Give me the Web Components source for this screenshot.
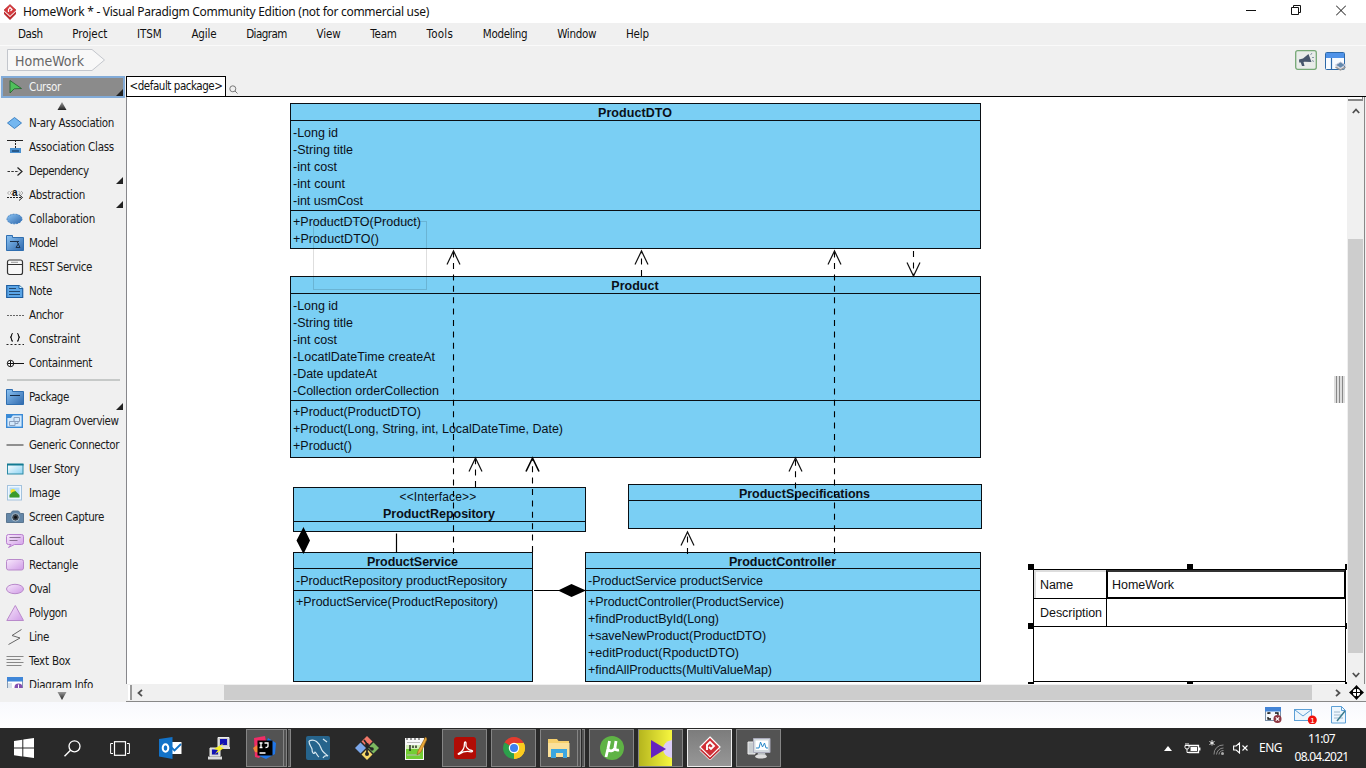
<!DOCTYPE html>
<html lang="en">
<head>
<meta charset="utf-8">
<title>HomeWork * - Visual Paradigm Community Edition</title>
<style>
html,body{margin:0;height:100%;overflow:hidden;background:#f0f0f0}
</style>
</head>
<body>
<vp-app></vp-app>
<script>
const UI = '"Noto Sans","Open Sans",sans-serif';
const TOOL = '"DejaVu Sans Condensed","DejaVu Sans","Noto Sans",sans-serif';

/* Base: renders a string template into an open shadow root */
class Base extends HTMLElement {
  connectedCallback() {
    if (this.shadowRoot) return;
    const t = document.createElement('template');
    t.innerHTML = this.view();
    this.attachShadow({mode: 'open'}).append(document.importNode(t.content, true));
  }
}

/* Text run tracked to a given width */
class FitText extends Base {
  view() {
    return `<style>:host{display:inline-block;white-space:pre;flex:none}</style><slot></slot>`;
  }
  connectedCallback() { super.connectedCallback(); FitText.all.push(this); }
  fit() {
    const w = +this.getAttribute('w');
    const own = this.getBoundingClientRect().width;
    if (w && own) this.style.letterSpacing = ((w - own) / this.textContent.length).toFixed(3) + 'px';
  }
}
FitText.all = [];
customElements.define('fit-text', FitText);

const DEFS = `<defs>
<linearGradient id="b" x1="0" y1="0" x2="1" y2="1"><stop offset="0" stop-color="#8cc4f4"/><stop offset="1" stop-color="#2f68ac"/></linearGradient>
<linearGradient id="p" x1="0" y1="0" x2="1" y2="1"><stop offset="0" stop-color="#f8e8fc"/><stop offset="1" stop-color="#cf9be6"/></linearGradient>
<linearGradient id="c" x1="0" y1="0" x2="1" y2="1"><stop offset="0" stop-color="#fff"/><stop offset="1" stop-color="#8bd3f3"/></linearGradient>
<linearGradient id="k" x1="0" y1="0" x2="0" y2="1"><stop offset="0" stop-color="#999"/><stop offset="1" stop-color="#222"/></linearGradient>
<linearGradient id="y" x1="0" y1="0" x2="1" y2="0"><stop offset="0" stop-color="#b5b51e"/><stop offset="1" stop-color="#f7f740"/></linearGradient></defs>`;

/* name: [width, height, svg body] */
const ICONS = {
  cursor: [18,18,'<path d="M4 2.500V15l4.200-4.200L15.500 10.500Z" fill="#4fc05a" stroke="#1f5e2b" stroke-width=".8"/>'],
  nary: [18,18,'<path d="M1.500 9 8.500 3.500 15.500 9 8.500 14.500Z" fill="#74b7f0" stroke="#3c82c4"/>'],
  assoc: [18,18,'<path d="M1 2.500h16M9.500 3v8" stroke="#222" fill="none"/><path d="M9.500 4v6" stroke="#eee" stroke-dasharray="1 2"/><rect x="4" y="10" width="11" height="5" fill="#4a90d0"/><rect x="6" y="12" width="7" height="2" fill="#285a8c"/>'],
  dep: [18,18,'<path d="M1.500 9.500H13" stroke="#333" stroke-dasharray="2.500 1.300"/><path d="M11.500 5.500 16 9.500l-4.500 4" fill="none" stroke="#222" stroke-width="1.200"/>'],
  abs: [18,18,'<path d="M1 11.500h15" stroke="#222" stroke-dasharray="2 1"/><path d="M13 8.500l3.500 3-3.500 3" fill="none" stroke="#222"/><path d="M3.500 5 1.500 7l2 2M6 5 4 7l2 2M12.500 5l2 2-2 2M15 5l2 2-2 2" fill="none" stroke="#999" stroke-width=".8"/><text x="6" y="9.500" font-family="Liberation Sans" font-weight="bold" font-size="10" fill="#111">a</text>'],
  collab: [18,18,'<ellipse cx="8.500" cy="9" rx="7.500" ry="4.800" fill="url(#b)" stroke="#3a7cc0" stroke-dasharray="2 1"/>'],
  model: [18,18,'<path d="M.5 1.500h6v2h11v13H.500Z" fill="url(#b)" stroke="#2f6eb0"/><path d="M4 7.500h9M11 7.500l3 6h-4l2.500-4" fill="none" stroke="#1c2f48"/>'],
  rest: [18,18,'<rect x="1.500" y="2" width="15" height="14.500" rx="2" fill="#f7f7f7" stroke="#333" stroke-width="1.200"/><path d="M2 6.500h14" stroke="#333"/><path d="M5 4.300h7" stroke="#999"/>'],
  note: [18,18,'<path d="M.7 3.500h12.500l3.500 3v9H.7Z" fill="#5ba5e6" stroke="#1d5da0" stroke-width="1.200"/><path d="M13 3.500v3h4" fill="#dff" stroke="#1d5da0"/><path d="M3 6.500h7M3 9.500h11M3 12.500h11" stroke="#24486e"/>'],
  anchor: [18,18,'<path d="M1 9.500h17" stroke="#666" stroke-dasharray="2 1"/>'],
  constraint: [18,18,'<path d="M.5 14.500h17.500" stroke="#222" stroke-dasharray="2 2"/><path d="M7 3.500c-1.500 0-1.500 1-1.500 2S5.500 7 4.200 7.200c1.300.2 1.300 1 1.300 2s0 2 1.500 2M11 3.500c1.500 0 1.500 1 1.500 2s0 1.500 1.300 1.700c-1.300.2-1.300 1-1.300 2s0 2-1.500 2" fill="none" stroke="#111" stroke-width="1.200"/>'],
  contain: [18,18,'<circle cx="4.500" cy="9.500" r="3.200" fill="#fff" stroke="#111"/><path d="M1.500 9.500H18M4.500 6.500v6" stroke="#111"/>'],
  pkg: [18,18,'<path d="M.5 1.500h6v2h11v13H.500Z" fill="url(#b)" stroke="#2f6eb0"/><path d="M4 7.500h10" stroke="#152a44"/>'],
  overview: [18,18,'<rect x=".7" y="2.700" width="15.600" height="12.600" fill="#d4e9fc" stroke="#3a8ad6" stroke-width="1.400"/><path d="M1 3h6l-2 3H1Z" fill="#3a8ad6"/><path d="M8 5.500h5.500v4H8ZM3.500 9.500H9v4H3.500ZM9 11.500h3v-2" fill="none" stroke="#8a9fbc"/>'],
  conn: [18,18,'<path d="M.5 9h17" stroke="#777" stroke-width="1.600"/>'],
  story: [18,18,'<rect x="1.500" y="4.500" width="15.500" height="9.500" fill="url(#c)" stroke="#2c8aa5"/><path d="M1 4.500h16.500" stroke="#137a92" stroke-width="2"/>'],
  image: [18,18,'<rect x="1.500" y="1.500" width="14" height="14.500" fill="#eef7ff" stroke="#a3c2dd"/><rect x="3.500" y="3.500" width="10" height="10" fill="#b6dcf8"/><circle cx="7" cy="7.500" r="2.500" fill="#f4e22c"/><path d="M3.500 13.500V11l3-3 3-1 4 4v2.500Z" fill="#3b9a2c"/>'],
  camera: [18,18,'<path d="M.5 5.500h4l2-2.500h6l2 2.500h3v9H.500Z" fill="#6487a8" stroke="#5b7690"/><circle cx="9.500" cy="9.300" r="3.800" fill="#3a444f" stroke="#a9bccb"/><circle cx="9.500" cy="9.300" r="1.500" fill="#111"/>'],
  callout: [18,18,'<path d="M2.500 2.500h13q2 0 2 2v6q0 2-2 2h-7l-6 3 2.500-3H2.500q-2 0-2-2v-6q0-2 2-2Z" fill="url(#p)" stroke="#b87fcf"/><path d="M3.500 5.500h11M3.500 8.500h8" stroke="#8d7296"/>'],
  rect: [18,18,'<rect x=".5" y="3.500" width="17" height="10.500" rx="2" fill="url(#p)" stroke="#b98acb"/>'],
  oval: [18,18,'<ellipse cx="9" cy="9" rx="8.500" ry="4.700" fill="url(#p)" stroke="#b98acb"/>'],
  poly: [18,18,'<path d="M9.300 1.500 17.500 16.500H.800Z" fill="url(#p)" stroke="#b98acb"/>'],
  line: [18,18,'<path d="M15.500 1.500 6 7.500l8 2.500-11.500 6.500" fill="none" stroke="#666"/>'],
  textbox: [18,18,'<path d="M.5 4.500h17M.5 7.500h14M.5 10.500h17M.5 13.500h15" stroke="#888"/>'],
  info: [18,18,'<rect x="1.500" y="1.500" width="15" height="15" fill="#fff" stroke="#8199b5"/><path d="M1 1h16v4.500H1Z" fill="#3f86d8"/><path d="M2 7h4v9H2Z" fill="#d8e2ec"/><circle cx="12.500" cy="11.500" r="4" fill="#8450b0"/><path d="M12.500 8.500v5" stroke="#fff"/>'],
  logo: [14,16,'<path d="M7 .5 13 6 7 11.500 1 6Z" fill="#d6383c" stroke="#b52a2e" stroke-width=".6"/><path d="M1 7.500 7 13 13 7.500V10L7 16 1 10Z" fill="#bd2c30"/><path d="M1 7 7 12.500 13 7" stroke="#f3c6c6" stroke-width=".6" fill="none"/><path d="M5.500 8V5.500L7 3.500l2 2-1.500 1.500" stroke="#fff" stroke-width="1.200" fill="none"/>'],
  up: [10,8,'<path d="M5 0 9.500 8H.500Z" fill="url(#k)"/>'],
  down: [10,8,'<path d="M5 8 9.500 0H.500Z" fill="url(#k)"/>'],
  mag: [9,9,'<circle cx="3.800" cy="3.800" r="3" fill="none" stroke="#777"/><path d="M6 6l2.500 2.500" stroke="#777"/>'],
  min: [10,11,'<path d="M0 5.500h10" stroke="#111"/>'],
  restore: [10,11,'<path d="M2.500 2.500v-2h7v7h-2M.5 2.500h7v7h-7Z" fill="none" stroke="#111"/>'],
  close: [10,11,'<path d="M0 .5l10 10M10 .5l-10 10" stroke="#111"/>'],
  mega: [22,20,'<rect x=".7" y=".7" width="20.600" height="18.600" rx="2" fill="#e9ecea" stroke="#76a876" stroke-width="1.300"/><path d="M4 9.500 8 8.500 13.500 4 16.500 12 9.500 11.800 8.500 12l1 4H7l-1.200-3.600L4.200 12.500Z" fill="#47566c"/><path d="M15.500 5l1.500-2M17 7.500h2M17 10.500l2 1" stroke="#8898a8"/>'],
  panel: [21,19,'<rect x=".5" y=".5" width="19" height="17" rx="1" fill="#f8fbff" stroke="#2c68a8"/><path d="M1 1h18v5H1Z" fill="#4f92e8"/><path d="M6.500 6v12" stroke="#2c68a8" stroke-width="1.200"/><path d="M15.500 10l5 3-5 3-5-3Z" fill="#6389ad" stroke="#ccd"/><path d="M10.500 15l5 3 5-3" fill="none" stroke="#999" stroke-width="1.500"/>'],
  cu: [8,6,'<path d="M.8 5 4 1.500 7.200 5" fill="none" stroke="#505050" stroke-width="1.800"/>'],
  cd: [8,6,'<path d="M.8 1 4 4.500 7.200 1" fill="none" stroke="#505050" stroke-width="1.800"/>'],
  cl: [6,8,'<path d="M5 .8 1.500 4 5 7.200" fill="none" stroke="#505050" stroke-width="1.800"/>'],
  cr: [6,8,'<path d="M1 .8 4.500 4 1 7.200" fill="none" stroke="#505050" stroke-width="1.800"/>'],
  move: [15,15,'<path d="M7.500 0 11 4H4ZM7.500 15 11 11H4ZM0 7.500 4 4v7ZM15 7.500 11 4v7Z" fill="#000"/><circle cx="7.500" cy="7.500" r="4.300" fill="#fff" stroke="#000" stroke-width="1.300"/><path d="M7.500 2v11M2 7.500h11" stroke="#000" stroke-width="1"/>'],
  errwin: [18,18,'<rect x=".5" y="1.500" width="15" height="13" fill="#f4f8fc" stroke="#7a90a8"/><path d="M0 1h16v4.500H0Z" fill="#4384d6"/><path d="M3 8V7h2.500M10 7h3v2M3 11v2h3" stroke="#111" fill="none" stroke-width="1.300"/><circle cx="12.500" cy="13" r="4" fill="#8c3540"/><path d="M10.800 11.300l3.400 3.400M14.200 11.300l-3.400 3.400" stroke="#fff" stroke-width="1.200"/>'],
  mail: [24,18,'<rect x=".5" y="3.500" width="17" height="11" fill="#eef6fc" stroke="#5c9fd6"/><path d="M1 4l8 6 8-6" fill="none" stroke="#5c9fd6"/><circle cx="18.300" cy="14" r="4.500" fill="#f0100c"/><text x="16.200" y="17" font-family="Liberation Sans" font-size="8" fill="#fff">1</text>'],
  doc: [16,18,'<path d="M.5.5h10l4 4v12.500H.500Z" fill="#eef7fe" stroke="#5c9fd6"/><path d="M10.500.5v4h4" fill="none" stroke="#5c9fd6"/><path d="M3 6h6M3 9h8M3 12h9" stroke="#a0b8cc"/><path d="M14 5 6 15" stroke="#3c7c8c" stroke-width="1.500"/>'],
  win: [20,20,'<path d="M0 3 8.300 1.700V9.600H0ZM9.300 1.500 20 0V9.600H9.300ZM0 10.500H8.300V18.500L0 17.200ZM9.300 10.500H20V20L9.300 18.600Z" fill="#fff"/>'],
  search: [17,17,'<circle cx="10.500" cy="6.300" r="5.500" fill="none" stroke="#fff" stroke-width="1.300"/><path d="M6.500 10.300.500 16.300" stroke="#fff" stroke-width="1.500"/>'],
  tasks: [20,15,'<rect x="4.500" y=".7" width="11" height="13.600" fill="none" stroke="#fff" stroke-width="1.200"/><path d="M3 2.500H.600v10H3M17 2.500h2.400v10H17" fill="none" stroke="#fff"/>'],
  outlook: [23,22,'<path d="M10 5h12.500v12H10Z" fill="#fff"/><path d="M12 10l3.500 3.500L22 7" fill="none" stroke="#1272c8" stroke-width="1.800"/><path d="M0 2 13.500 0v22L0 19.500Z" fill="#1272c8"/><ellipse cx="6.500" cy="11" rx="2.800" ry="3.700" fill="none" stroke="#fff" stroke-width="2"/>'],
  putty: [23,23,'<path d="M10 .5h11V10H10Z" fill="#ccc" stroke="#eee"/><path d="M12 2h7v6h-7Z" fill="#1212b4"/><path d="M2 11h10v8H2Z" fill="#ccc" stroke="#eee"/><path d="M4 12.500h6v5H4Z" fill="#1212b4"/><path d="M0 19.500h14v3H0ZM9 10h13v2H9Z" fill="#ddd"/><path d="M16 6 6 12l4 1-3 4 9-6-4-1Z" fill="#f5ee22"/>'],
  idea: [24,24,'<path d="M1 2 12 0l2 12-8 10-4-1Z" fill="#f02c67"/><path d="M0 12l4-3 3 8-5-1Z" fill="#f58435"/><path d="M15 2l8 5-1 11-9 5-7-3 6-10Z" fill="#2177e8"/><rect x="4.500" y="4.500" width="15" height="15" fill="#000"/><path d="M6.500 7h3M8 7v4.500M6.500 11.500h3M11.500 7h3.500v3q0 1.500-2.500 1.500M6.500 17h6" stroke="#fff" stroke-width="1.300" fill="none"/>'],
  mysql: [24,24,'<rect width="24" height="24" rx="2" fill="#26648c"/><path d="M3 5c6-3 10 2 12 7 1 4 5 6 7 8-3-1-4 0-5 2M3 5c0 4 2 5 3 8 0 4 2 6 3 3 1 0 2 4 4 5M17 3l4 3" fill="none" stroke="#d8e8f0" stroke-width="1.200"/>'],
  git: [24,24,'<path d="M12 0l5.500 5.500L12 11 6.500 5.500Z" fill="#f27869"/><path d="M18.500 6.500 24 12l-5.500 5.500L13 12Z" fill="#7db860"/><path d="M5.500 6.500 11 12l-5.500 5.500L0 12Z" fill="#7ba7ea"/><path d="M12 13l5.500 5.500L12 24l-5.500-5.500Z" fill="#f6d768"/><path d="M9 4l3 4v9M12 10l5 3" stroke="#242424" stroke-width="1.700" fill="none"/><circle cx="12" cy="9" r="2" fill="#242424"/><circle cx="12" cy="18" r="2" fill="#242424"/><circle cx="17" cy="13" r="1.800" fill="#242424"/>'],
  npp: [23,24,'<path d="M1 2h19v22H1Z" fill="#f8f8f8"/><path d="M2 13h17v10H2Z" fill="#73cd34"/><path d="M2 9h17v4H2Z" fill="#d4efb8"/><path d="M3 2v2M7 2v2M11 2v2M15 2v2" stroke="#777" stroke-width="1.500"/><path d="M3 6.500h13M3 19h13" stroke="#bbb"/><path d="M6 9v6M9 9.500v2.500M12 9.500v2.500" stroke="#111" stroke-width="1.300"/><path d="M21.500 1 14 15l-1 4 4-3L23 3Z" fill="#eaa738" stroke="#94661d" stroke-width=".7"/>'],
  acro: [22,22,'<rect width="22" height="22" rx="3" fill="#b10c05"/><path d="M4.500 16.500c4-1.500 6-6 6-10.500 0-1.500 1.700-1.500 1.500.5-.8 3 2 7 6 7 1 .3.500 1.500-1 1.300-4-.8-8-.2-11 2-1 .7-2.500.6-1.500-.3Z" fill="none" stroke="#fff" stroke-width="1.300"/>'],
  chrome: [22,22,'<path d="M11 11 1.500 5.500A11 11 0 0 1 20.500 5.500Z" fill="#e33b2e"/><path d="M11 11 20.500 5.500A11 11 0 0 1 11 22Z" fill="#fbcb1f"/><path d="M11 11v11A11 11 0 0 1 1.500 5.500Z" fill="#2ca14b"/><path d="M11 6h9.800A11 11 0 0 1 11 22l4.500-8Z" fill="#fbcb1f"/><circle cx="11" cy="11" r="5.200" fill="#fff"/><circle cx="11" cy="11" r="4" fill="#3f80f0"/>'],
  files: [22,19,'<path d="M0 0h9l1.500 2H21v16H0Z" fill="#f6cf6c"/><path d="M0 4h21.500v14H0Z" fill="#fbe09a"/><path d="M3 19v-9h16v9h-4v-5H8v5Z" fill="#3ba6e0"/>'],
  ut: [24,24,'<circle cx="12" cy="12" r="12" fill="#5fb345"/><path d="M9.500 5 8 12.500 6 21M8 12.500c.5 3.500 6 3 7-1L16 5M15 11.500c0 2.500 1.500 3 4 2.500" fill="none" stroke="#fff" stroke-width="2.800"/>'],
  play: [42,37,'<path d="M0 0h33v37H0Z" fill="url(#y)"/><path d="M33 10v18q-9-2-9-9t9-9Z" fill="#dccdf7"/><path d="M12 10v18l15-9Z" fill="#6423c0"/>'],
  vp: [22,24,'<path d="M11 1 21 11 11 21 1 11Z" fill="#d02f36" stroke="#fff" stroke-width="1.200"/><path d="M1.500 13.500 11 22.500l9.500-9" fill="none" stroke="#fff" stroke-width="3"/><path d="M1.500 13.500 11 22.500l9.500-9" fill="none" stroke="#c12a31" stroke-width="1.700"/><path d="M8 14V9l3-3 4 4-3 3-2-2" fill="none" stroke="#fff" stroke-width="1.900"/>'],
  mon: [24,22,'<path d="M1 5h7v12H1Z" fill="#c8cdd0" stroke="#eee"/><path d="M6.500 1.500H23v14H6.500Z" fill="#d3dade" stroke="#aab"/><path d="M8.500 3.500H21v9.500H8.500Z" fill="#fff"/><path d="M9 11h3l1.500-6 2 5 2-4 1.500 5h2" fill="none" stroke="#2888c8"/><path d="M11 16h7l1 3h-9Z" fill="#b8bdc0"/><ellipse cx="14" cy="19.500" rx="6" ry="2" fill="#ddd"/>'],
  tri: [8,5,'<path d="M4 0 8 5H0Z" fill="#fff"/>'],
  batt: [17,12,'<path d="M5 3.500h9.500v7H4.500M15.800 5.500v3" fill="none" stroke="#fff" stroke-width="1.300"/><path d="M6.500 5h6.500v4H6.500Z" fill="#fff"/><path d="M1 3.500h4v2q0 1.500-2 1.500t-2-1.500ZM2 1v2M4 1v2M3 7v3.500h2" fill="none" stroke="#fff"/>'],
  wifi: [16,16,'<path d="M5 14.500A9 9 0 0 1 14.500 5M7.500 14.500A7 7 0 0 1 14.500 8M10 14.500a4.500 4.500 0 0 1 4.500-4" fill="none" stroke="#8a8a8a"/><circle cx="13.500" cy="13.500" r="1.500" fill="#aaa"/><path d="M3 0v5.500M.5 1.500l5 3M5.500 1.500l-5 3" stroke="#fff" stroke-width=".9"/>'],
  mute: [15,12,'<path d="M.6 4h2.600L6.500 1v10L3.200 8H.600Z" fill="none" stroke="#fff" stroke-width="1.100"/><path d="M9.500 3.500l5 5M14.500 3.500l-5 5" stroke="#fff" stroke-width="1.100"/>']
};
class VpIcon extends Base {
  view() {
    const [w, h, body] = ICONS[this.getAttribute('name')];
    return `<style>:host{display:block;flex:none;width:${w}px;height:${h}px}svg{display:block}</style>
    <svg width="${w}" height="${h}" viewBox="0 0 ${w} ${h}">${/url\(#/.test(body) ? DEFS : ''}${body}</svg>`;
  }
}
customElements.define('vp-icon', VpIcon);

class TitleBar extends Base {
  view() {
    return `<style>:host{display:flex;align-items:center;height:23px;background:#fff;font:12px ${UI};color:#111;padding:0 20px 0 3px}
    .t{margin-left:6px;flex:1}.w{display:flex;gap:35px;margin-bottom:2px;margin-right:0}</style>
    <vp-icon name="logo"></vp-icon><div class="t"><fit-text w="406">HomeWork * - Visual Paradigm Community Edition (not for commercial use)</fit-text></div>
    <div class="w"><vp-icon name="min"></vp-icon><vp-icon name="restore"></vp-icon><vp-icon name="close"></vp-icon></div>`;
  }
}
customElements.define('vp-title', TitleBar);

class MenuBar extends Base {
  view() {
    const items = [['Dash',24.5],['Project',35],['ITSM',24.5],['Agile',25],['Diagram',40.5],['View',24],['Team',26.5],['Tools',26.5],['Modeling',44.5],['Window',39],['Help',23]];
    return `<style>:host{display:flex;align-items:center;height:22px;border-bottom:1px solid #fafafa;padding-left:18px;gap:29.800px;font:11.500px/22px ${TOOL};color:#111}</style>
    ${items.map(([t, w]) => `<fit-text w="${w}">${t}</fit-text>`).join('')}`;
  }
}
customElements.define('vp-menu', MenuBar);

class ToolBar extends Base {
  view() {
    return `<style>:host{display:flex;align-items:flex-start;height:30px;padding:0 20px 0 7px;font:14px/23px ${TOOL};color:#666;box-sizing:border-box}
    .crumb{display:grid;width:98px;margin-top:3px;margin-right:auto}.crumb>*{grid-area:1/1}.crumb fit-text{margin-left:8px;justify-self:start;padding-top:1px}
    vp-icon{margin-top:4px}vp-icon+vp-icon{margin-left:8px;margin-top:6px}</style>
    <div class="crumb"><svg width="98" height="23"><path d="M.5.5H85L97.500 11 85 21.500H.500Z" fill="#f8f8f8" stroke="#c3c6cc"/></svg><fit-text w="69">HomeWork</fit-text></div>
    <vp-icon name="mega"></vp-icon><vp-icon name="panel"></vp-icon>`;
  }
}
customElements.define('vp-toolbar', ToolBar);

class ToolItem extends Base {
  view() {
    const more = this.hasAttribute('more') ? '<i></i>' : '';
    return `<style>:host{display:flex;align-items:center;height:24px;padding-left:6px;gap:5px;flex:none;box-sizing:border-box;font:11.500px/24px ${TOOL};color:#1a1a1a}
    :host([active]){height:22px;background:#8b8b8b;border:2px solid #82abd8;padding-left:3px;margin:0 1px;color:#f4f4f4;line-height:18px}
    i{margin-left:auto;align-self:flex-end;margin-right:3px;margin-bottom:-1px;width:7px;height:7px;background:#222;clip-path:polygon(100% 0,100% 100%,0 100%)}
    :host([active]) i{margin:0 0 0 auto}</style>
    <vp-icon name="${this.getAttribute('icon')}"></vp-icon><fit-text w="${this.getAttribute('w')}">${this.getAttribute('label')}</fit-text>${more}`;
  }
}
customElements.define('tool-item', ToolItem);

class Palette extends Base {
  view() {
    const a = [['nary','N-ary Association',85],['assoc','Association Class',85],['dep','Dependency',59.5,1],['abs','Abstraction',56,1],['collab','Collaboration',66],['model','Model',28.5],['rest','REST Service',63],['note','Note',23],['anchor','Anchor',34],['constraint','Constraint',51],['contain','Containment',63]];
    const b = [['pkg','Package',40,1],['overview','Diagram Overview',89.5],['conn','Generic Connector',90],['story','User Story',50.5],['image','Image',31],['camera','Screen Capture',75],['callout','Callout',35],['rect','Rectangle',49],['oval','Oval',21.5],['poly','Polygon',38],['line','Line',20],['textbox','Text Box',41.5],['info','Diagram Info',64]];
    const row = ([i, l, w, m]) => `<tool-item icon="${i}" label="${l}" w="${w}" ${m ? 'more' : ''}></tool-item>`;
    return `<style>:host{display:flex;flex-direction:column;width:126px;flex:none;background:#f0f0f0;box-sizing:border-box}
    .list{height:577px;overflow:hidden;display:flex;flex-direction:column}
    hr{border:0;height:2px;flex:none;background:#c6c9c8;margin:4px 6px 4px 7px}
    .u{margin:4px 0 1px 57px}.d{margin:4px 0 0 57px}</style>
    <tool-item active more icon="cursor" label="Cursor" w="32"></tool-item>
    <vp-icon class="u" name="up"></vp-icon>
    <div class="list">${a.map(row).join('')}<hr>${b.map(row).join('')}</div>
    <vp-icon class="d" name="down"></vp-icon>`;
  }
}
customElements.define('vp-palette', Palette);

/* UML class node; coordinates are those of the window, canvas origin is 127,97 */
class UmlClass extends Base {
  view() {
    const [x, y, w, h, head] = this.getAttribute('box').split(' ').map(Number);
    const d = JSON.parse(this.getAttribute('data'));
    const rows = r => r.map(([t, n]) => `<div class="r"><fit-text w="${n}">${t.replace(/</g, '&lt;')}</fit-text></div>`).join('');
    return `<style>:host{position:absolute;left:${x - 127}px;top:${y - 97}px;width:${w}px;height:${h}px;box-sizing:border-box;border:1px solid #0a0f14;background:#7acff4;font:12.500px/17px "Liberation Sans",Arial,sans-serif;color:#0a1018}
    header{height:${head}px;text-align:center;font-weight:bold;border-bottom:1px solid #0a0f14}
    header .n{height:17px;line-height:18px;padding-right:1px}
    header small{display:block;font:12px/17px "Liberation Sans",Arial,sans-serif;height:17px;line-height:18px;padding-right:3px}
    section{padding:4px 0 0 2px}section+section{border-top:1px solid #0a0f14;padding-top:3px}.r{height:17px}</style>
    <header>${d.kind ? `<small><fit-text w="77">&lt;&lt;${d.kind}&gt;&gt;</fit-text></small>` : ''}<div class="n"><fit-text w="${d.w}">${d.name}</fit-text></div></header>
    ${d.attrs ? `<section>${rows(d.attrs)}</section>` : ''}${d.ops ? `<section>${rows(d.ops)}</section>` : ''}`;
  }
}
customElements.define('uml-class', UmlClass);

class InfoTable extends Base {
  view() {
    return `<style>:host{position:absolute;left:906px;top:472px;width:313px;height:113px;box-sizing:border-box;border:1px solid #000;background:#fff;font:12.500px "Liberation Sans",Arial,sans-serif;color:#111;display:grid;grid-template:29px 28px 1fr / 73px 1fr}
    div{display:flex;align-items:center;padding-left:6px;border-bottom:1px solid #000;padding-top:1px}
    .n{box-shadow:inset 2px 2px #ddd}.k{border-right:1px solid #000}.v{border:2px solid #000;border-top:2px solid #333;border-right-width:1px;padding-left:4px;margin-left:-1px}
    </style>
    <div class="k n"><fit-text w="33">Name</fit-text></div><div class="v"><fit-text w="62">HomeWork</fit-text></div>
    <div class="k"><fit-text w="62">Description</fit-text></div><div></div>`;
  }
}
customElements.define('info-table', InfoTable);

class DiagramCanvas extends Base {
  view() {
    const nodes = [
      ['290 103 691 146 16', {name:'ProductDTO',w:74,attrs:[['-Long id',45],['-String title',60],['-int cost',44],['-int count',52],['-int usmCost',70]],ops:[['+ProductDTO(Product)',128],['+ProductDTO()',86]]}],
      ['290 276 691 182 16', {name:'Product',w:47.5,attrs:[['-Long id',45],['-String title',60],['-int cost',44],['-LocatlDateTime createAt',142],['-Date updateAt',84],['-Collection orderCollection',146]],ops:[['+Product(ProductDTO)',128],['+Product(Long, String, int, LocalDateTime, Date)',270],['+Product()',59]]}],
      ['293 487 293 45 33', {kind:'Interface',name:'ProductRepository',w:112}],
      ['628 484 354 45 15', {name:'ProductSpecifications',w:131}],
      ['293 552 240 130 15', {name:'ProductService',w:91,attrs:[['-ProductRepository productRepository',211]],ops:[['+ProductService(ProductRepository)',202]]}],
      ['585 552 396 130 15', {name:'ProductController',w:107,attrs:[['-ProductService productService',175]],ops:[['+ProductController(ProductService)',196],['+findProductById(Long)',131],['+saveNewProduct(ProductDTO)',178],['+editProduct(RpoductDTO)',151],['+findAllProductts(MultiValueMap)',184]]}]
    ];
    const up = (x, y) => `M${x - 6.5} ${y + 13.5}L${x} ${y}L${x + 6.5} ${y + 13.5}`;
    const heads = [[453.5,251],[641.5,251],[834.5,251],[475.5,458],[795.5,458],[687.5,532]].map(p => up(...p)).join('');
    const dashes = [[453.5,251,554],[641.5,251,276],[834.5,251,554],[475.5,458,487],[532.5,458,552],[795.5,458,500],[687.5,532,554]]
      .map(([x, a, b]) => `M${x} ${b}V${a}`).join('');
    const grips = [[1028,564],[1187,564],[1345,564],[1028,623],[1345,623],[1028,682],[1187,682],[1345,682]]
      .map(([x, y]) => `<rect x="${x}" y="${y}" width="6" height="6"/>`).join('');
    return `<style>:host{display:block;position:relative;overflow:hidden;background:#fff}
    svg.o{position:absolute;left:0;top:0}</style>
    ${nodes.map(([b, d]) => `<uml-class box="${b}" data='${JSON.stringify(d)}'></uml-class>`).join('')}
    <info-table></info-table>
    <svg class="o" width="1220" height="587" viewBox="127 97 1220 587">
      <rect x="313.5" y="221.5" width="113" height="68" fill="none" stroke="#000" stroke-opacity=".13"/>
      <path d="${dashes}M913.5 251V276" fill="none" stroke="#000" stroke-width="1.100" stroke-dasharray="6 5.400"/>
      <path d="${heads}M907 262.500L913.500 276L920 262.500" fill="none" stroke="#111" stroke-width="1.200"/>
      <path d="${up(532.5, 458)}" fill="none" stroke="#000" stroke-width="1.600"/>
      <path d="M396.500 533.500V553M534 590.500H560" stroke="#000" stroke-width="1.200"/>
      <path d="M303.500 527 310 540.500 303.500 554 296.500 540.500ZM558 590.500 571.500 584 586 590.500 571.500 597Z"/>
      ${grips}
    </svg>`;
  }
}
customElements.define('diagram-canvas', DiagramCanvas);

class Editor extends Base {
  view() {
    return `<style>:host{flex:1;min-width:0;display:grid;grid-template:21px 587px 18px / 1221px 19px;position:relative}
    .tabs{grid-column:1/3;display:flex;border-bottom:1px solid #000;box-sizing:border-box;height:21px}
    .tab{width:98px;height:19px;border:1px solid #000;border-bottom:0;background:#fff;font:11.500px/18px ${TOOL};color:#111;text-align:center}
    .tabs vp-icon{margin:9px 0 0 3px}
    diagram-canvas{border-left:1px solid #87878b}
    .v{display:flex;flex-direction:column;align-items:center;background:#f0f0f0;border-right:1px solid #888;margin-right:1px;box-sizing:border-box}
    .v .s{width:15px;height:4px;border-bottom:2px solid #888;border-right:1px solid #888;background:#fff;margin-bottom:7px;box-sizing:border-box}
    .v b{width:15px;height:414px;background:#cdcdcd;margin:125px 0 0}
    .v .d{margin-top:19px}
    .h{display:flex;align-items:center;border-bottom:1px solid #888;box-sizing:border-box;padding-left:2px}
    .h .s{width:2px;height:15px;border-right:2px solid #999;background:#fff;margin-right:5px}
    .h b{width:1088px;height:15px;background:#cdcdcd;margin:0 23px 0 81px}
    .c{display:flex;align-items:center;justify-content:flex-end;border-bottom:1px solid #888;box-sizing:border-box;padding-right:2px}
    .grip{position:absolute;left:1208px;top:300px;width:11px;height:27px;background:linear-gradient(90deg,#ddd 2px,#888 2px 3px,#ddd 3px 5px,#888 5px 6px,#ddd 6px 8px,#888 8px 9px,#ddd 9px)}
    </style>
    <div class="tabs"><div class="tab"><fit-text w="93">&lt;default package&gt;</fit-text></div><vp-icon name="mag"></vp-icon></div>
    <diagram-canvas></diagram-canvas>
    <div class="v"><div class="s"></div><vp-icon name="cu"></vp-icon><b></b><vp-icon class="d" name="cd"></vp-icon></div>
    <div class="h"><div class="s"></div><vp-icon name="cl"></vp-icon><b></b><vp-icon name="cr"></vp-icon></div>
    <div class="c"><vp-icon name="move"></vp-icon></div>
    <div class="grip"></div>`;
  }
}
customElements.define('vp-editor', Editor);

class StatusBar extends Base {
  view() {
    return `<style>:host{display:flex;justify-content:flex-end;align-items:center;height:26px;background:linear-gradient(#f8f9fd,#fff);padding-right:19px;gap:11px}
    vp-icon:nth-of-type(2){margin-right:2px}</style>
    <vp-icon name="errwin"></vp-icon><vp-icon name="mail"></vp-icon><vp-icon name="doc"></vp-icon>`;
  }
}
customElements.define('vp-status', StatusBar);

class TaskButton extends Base {
  view() {
    return `<style>:host{display:flex;width:49px;height:40px;flex:none;padding:1px 2px;box-sizing:border-box}
    div{flex:1;display:flex;align-items:center;justify-content:center;box-sizing:border-box;border:1px solid transparent;overflow:hidden}
    :host([open]) div{background:#535353;border-color:#858585}
    :host([current]) div{background:linear-gradient(#7c7c7c,#979797);border-color:#eee}
    :host([left]) div{justify-content:flex-start}
    i{display:none;width:2px;border:1px solid #858585;border-left:0;background:#535353}
    i+i{margin-left:1px}:host([stack]) i{display:block}</style>
    <div><vp-icon name="${this.getAttribute('icon')}"></vp-icon></div><i></i><i></i>`;
  }
}
customElements.define('task-button', TaskButton);

class TaskBar extends Base {
  view() {
    const b = [['outlook'],['putty'],['idea','open stack'],['mysql'],['git'],['npp'],['acro','open'],['chrome','open'],['files','open stack'],['ut','open'],['play','open left'],['vp','open current'],['mon','open']];
    return `<style>:host{display:flex;height:40px;background:#292929;color:#fff;font:12px/18px ${UI}}
    .s{width:48px;display:flex;align-items:center;justify-content:center}
    .g{width:2px}.tray{margin-left:auto;display:flex;align-items:center;padding-right:17px}
    .clock{margin-left:12px;width:55px;display:flex;flex-direction:column;align-items:center;margin-top:-1px}</style>
    <div class="s"><vp-icon name="win"></vp-icon></div><div class="s"><vp-icon name="search"></vp-icon></div><div class="s"><vp-icon name="tasks"></vp-icon></div><div class="g"></div>
    ${b.map(([i, a]) => `<task-button icon="${i}" ${a || ''}></task-button>`).join('')}
    <div class="tray"><vp-icon name="tri" style="margin-right:12px"></vp-icon><vp-icon name="batt" style="margin-right:8px"></vp-icon><vp-icon name="wifi" style="margin-right:8px"></vp-icon><vp-icon name="mute" style="margin-right:11px"></vp-icon><fit-text w="23">ENG</fit-text>
    <div class="clock"><fit-text w="27">11:07</fit-text><fit-text w="54">08.04.2021</fit-text></div></div>`;
  }
}
customElements.define('task-bar', TaskBar);

class VpApp extends Base {
  view() {
    return `<style>:host{display:flex;flex-direction:column;width:1366px;height:768px;background:#f0f0f0;overflow:hidden}
    main{display:flex;height:626px;flex:none}</style>
    <vp-title></vp-title><vp-menu></vp-menu><vp-toolbar></vp-toolbar>
    <main><vp-palette></vp-palette><vp-editor></vp-editor></main>
    <vp-status></vp-status><task-bar></task-bar>`;
  }
}
customElements.define('vp-app', VpApp);
FitText.all.forEach(f => f.fit());
</script>
</body>
</html>
